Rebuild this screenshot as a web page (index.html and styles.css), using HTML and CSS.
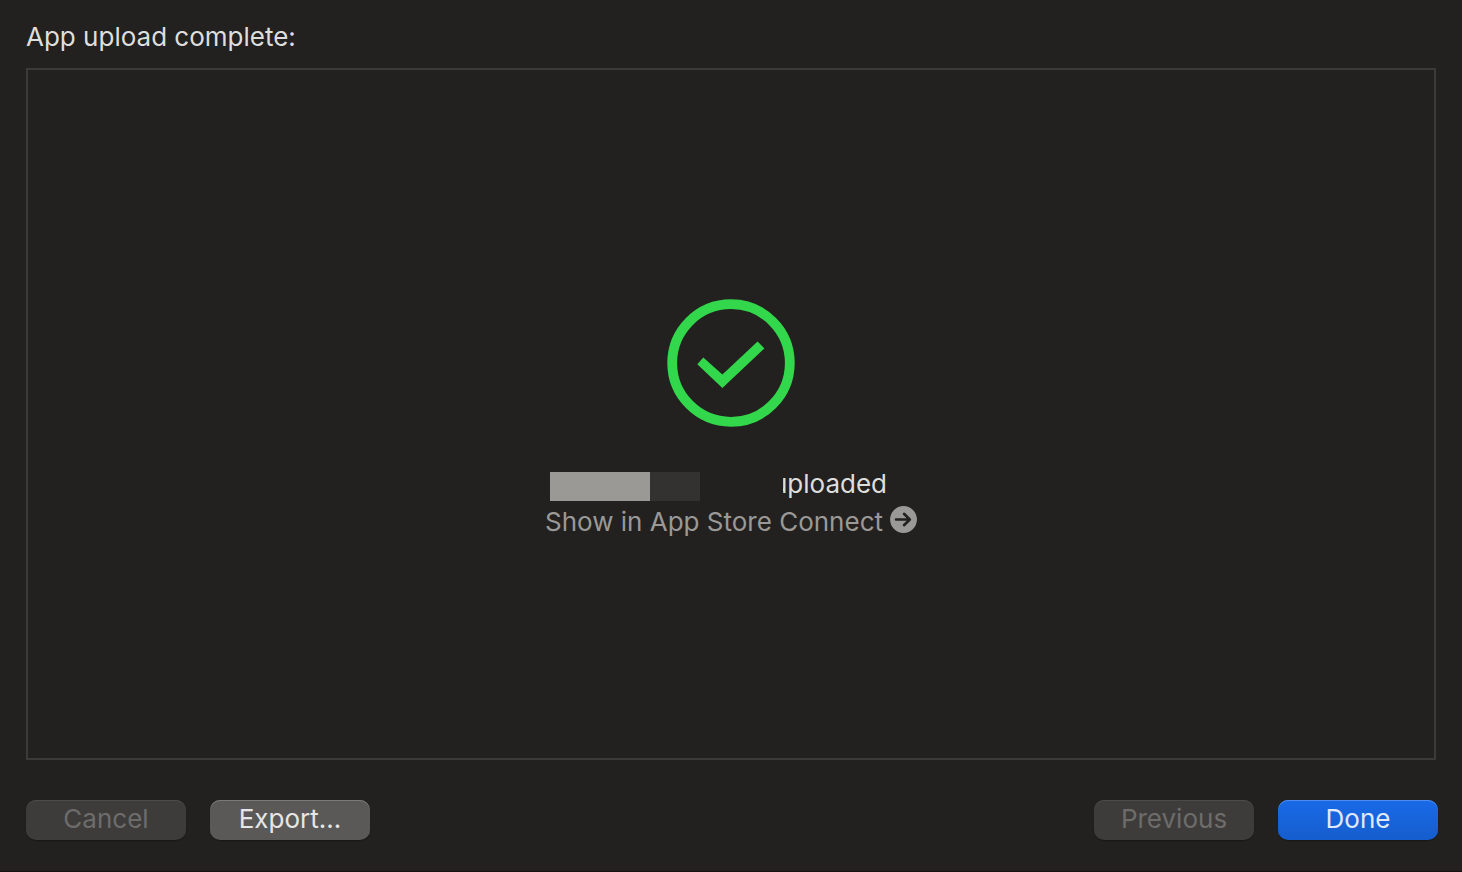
FILE: index.html
```html
<!DOCTYPE html>
<html lang="en">
<head>
<meta charset="utf-8">
<meta name="viewport" content="width=device-width, initial-scale=1">
<title>App upload complete</title>
<link rel="stylesheet" href="styles.css">
</head>
<body>
<main class="dialog">
  <h1 class="title">App upload complete:</h1>
  <section class="panel">
    <svg class="success" viewBox="0 0 128 128" aria-hidden="true">
      <circle cx="64" cy="64" r="58.8" fill="none" stroke="currentColor" stroke-width="9.8"/>
      <path d="M30.3 65.3 36.3 58.5 55.4 75.4 90.6 42.6 97.4 49.4 55.4 89Z" fill="currentColor"/>
    </svg>
    <div class="result">
      <p class="status">
        <span class="redacted"></span>
        <span class="clipped"><span>uploaded</span></span>
      </p>
      <a class="link" href="#">
        <span>Show in App Store Connect</span>
        <svg class="arrow" viewBox="0 0 27 27" aria-hidden="true">
          <circle cx="13.5" cy="13.5" r="13.4" fill="currentColor"/>
          <path class="arrow-line" d="M6 13.5H19.5M14 7.8 19.8 13.5 14 19.2"/>
        </svg>
      </a>
    </div>
  </section>
  <footer class="actions">
    <button class="button" type="button" disabled>Cancel</button>
    <button class="button button-normal" type="button">Export…</button>
    <button class="button push" type="button" disabled>Previous</button>
    <button class="button button-primary" type="button">Done</button>
  </footer>
</main>
</body>
</html>
```
FILE: styles.css
```css
* {
  box-sizing: border-box;
}

body {
  margin: 0;
  background: #22211f;
  color: #dededd;
  font-family: Inter, "Liberation Sans", sans-serif;
  font-size: 26px;
  line-height: 32px;
}

.dialog {
  display: flex;
  flex-direction: column;
  min-height: 100vh;
  padding: 21px 24px 31px 26px;
  border-bottom: 1px solid #161113;
}

.title {
  margin: 0 0 15px;
  font-size: 26px;
  font-weight: 400;
}

.panel {
  flex: 1;
  display: flex;
  flex-direction: column;
  align-items: center;
  justify-content: center;
  gap: 40px;
  margin-right: 2px;
  padding-top: 9px;
  border: 2px solid #3a3a38;
}

.success {
  width: 128px;
  height: 128px;
  color: #32d74b;
}

.result {
  display: flex;
  flex-direction: column;
  gap: 5px;
}

.status {
  display: flex;
  align-items: center;
  justify-content: space-between;
  margin: 0;
  padding: 0 30px 0 5px;
}

.redacted {
  width: 150px;
  height: 29px;
  margin-top: 5px;
  background: linear-gradient(to right, #9a9996 100px, #333230 100px);
}

/* The product name's cover also hides the left edge of the first letter. */
.clipped {
  display: flex;
  justify-content: flex-end;
  width: 104px;
  overflow: hidden;
}

.link {
  display: flex;
  align-items: center;
  gap: 7px;
  color: #9a9997;
  text-decoration: none;
}

.arrow {
  width: 27px;
  height: 27px;
  margin-bottom: 5px;
}

.arrow-line {
  fill: none;
  stroke: #22211f;
  stroke-width: 2.6;
  stroke-linecap: round;
  stroke-linejoin: round;
}

.actions {
  display: flex;
  gap: 24px;
  margin-top: 40px;
}

.button {
  width: 160px;
  height: 40px;
  padding: 0 0 2px;
  border: 0;
  border-radius: 10px;
  background: #3d3c3a;
  box-shadow: inset 0 1px 0 #4c4b49, 0 1px 1px #191817;
  color: #6d6c6a;
  font: inherit;
}

.button-normal {
  background: #5a5957;
  box-shadow: inset 0 1px 0 #7b7a78, 0 1px 1px #191817;
  color: #e6e6e5;
}

.button-primary {
  background: linear-gradient(#196ae8, #155dcd);
  box-shadow: inset 0 1px 0 #4c8cf0, 0 1px 1px #191817;
  color: #e0e9f9;
}

.push {
  margin-left: auto;
}
```
